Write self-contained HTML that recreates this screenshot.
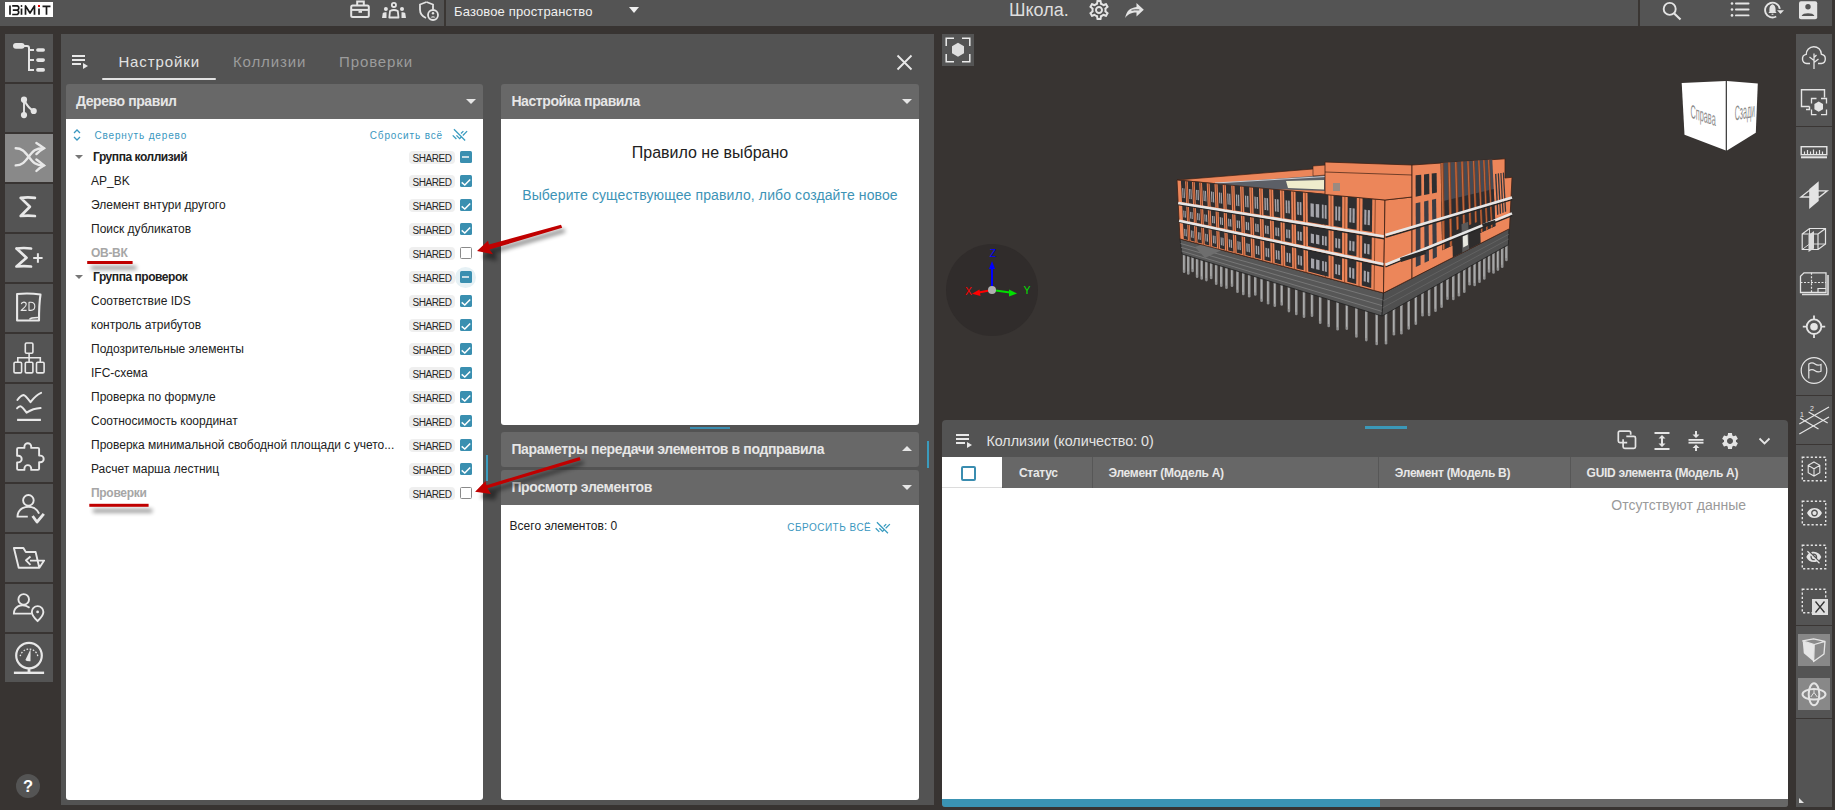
<!DOCTYPE html>
<html><head><meta charset="utf-8">
<style>
*{box-sizing:border-box;margin:0;padding:0}
html,body{width:1835px;height:810px;overflow:hidden;background:#383432;font-family:"Liberation Sans",sans-serif}
.a{position:absolute}
#top{left:0;top:0;width:1835px;height:26px;background:#545454}
.sb{position:absolute;left:5px;width:48px;height:48px;background:#545454}
.sb svg{position:absolute;left:0;top:0}
#panel{left:61px;top:34px;width:873px;height:771px;background:#535353}
.hdr{position:absolute;background:#686868;color:#e6e6e6;font-weight:bold;font-size:14px;letter-spacing:-0.42px;border-radius:3px 3px 0 0}
.hdr span{position:absolute;left:10px;top:10px;line-height:16px}
.tri{position:absolute;width:0;height:0;border-left:5px solid transparent;border-right:5px solid transparent;border-top:5px solid #e6e6e6}
.triu{position:absolute;width:0;height:0;border-left:5px solid transparent;border-right:5px solid transparent;border-bottom:5px solid #e6e6e6}
.white{position:absolute;background:#fff}
.row{position:absolute;left:0;width:417px;height:24px}
.row .t{position:absolute;left:25px;top:5px;font-size:12px;line-height:14px;color:#212121;white-space:nowrap}
.row .g{left:27px;font-weight:bold;letter-spacing:-0.45px}
.row .gr{color:#a6a6a6;font-weight:bold;letter-spacing:-0.3px}
.chip{position:absolute;left:343px;top:6px;width:46px;height:13px;border-radius:4px;background:#efefef;color:#262626;font-size:10px;line-height:13px;padding-top:1px;text-align:center;letter-spacing:-0.45px}
.cb{position:absolute;left:393.5px;top:6px;width:12px;height:12px;border-radius:1.5px;background:#3a8fb0}
.cbu{background:#fff;border:1px solid #8a8a8a}
.th{position:absolute;top:45.5px;font-size:12px;font-weight:bold;line-height:14px;color:#e8e8e8;letter-spacing:-0.3px;white-space:nowrap}
.ttri{position:absolute;left:9px;top:10px;width:0;height:0;border-left:4px solid transparent;border-right:4px solid transparent;border-top:4px solid #777}
</style></head>
<body>
<!-- TOP BAR -->
<div id="top" class="a">
  <!-- logo -->
  <svg class="a" style="left:5px;top:2px" width="48" height="15" viewBox="0 0 48 15">
    <rect width="48" height="15" fill="#fff"/>
    <g fill="none" stroke="#1a1a1a" stroke-width="1.7">
      <path d="M5 3.5 V12.8"/>
      <path d="M7.2 3.9 H12.3 A2.2 2.2 0 0 1 12.3 8.1 H7.8 M12.3 8.1 A2.4 2.4 0 0 1 12.3 12.5 H7.2"/>
      <path d="M16.5 6.5 V12.8"/>
      <path d="M20.5 12.8 V3.9 L25 11 L29.5 3.9 V12.8" stroke-linejoin="round"/>
      <path d="M34 6.5 V12.8"/>
      <path d="M37.5 4.3 H45.5 M41.5 4.3 V12.8"/>
    </g>
    <circle cx="16.5" cy="4" r="0.9" fill="#1a1a1a"/>
    <rect x="33" y="3" width="2" height="2" fill="#e00"/>
  </svg>
  <!-- top icons -->
  <svg class="a" style="left:348px;top:0" width="100" height="24" viewBox="0 0 100 24" fill="none" stroke="#e4e4e4" stroke-width="2">
    <rect x="3.2" y="5.4" width="17.6" height="11.6" rx="1.5"/>
    <path d="M3.2 9.9 H20.8"/>
    <path d="M9.2 5 V1.5 H15.8 V5"/>
    <rect x="10.5" y="10.8" width="3.5" height="2" fill="#e4e4e4" stroke="none"/>
    <circle cx="45.9" cy="4.9" r="2.1" stroke-width="1.8"/>
    <path d="M41.3 17.5 L42 11 Q45.9 9 49.8 11 L50.5 17.5 Z" stroke-width="1.8" stroke-linejoin="round"/>
    <g fill="#e4e4e4" stroke="none">
      <circle cx="37.9" cy="9" r="2"/><circle cx="54" cy="9" r="2"/>
      <path d="M34 18 L34.8 13 Q36 12 38.5 12.3 L38.5 18 Z"/>
      <path d="M58 18 L57.2 13 Q56 12 53.5 12.3 L53.5 18 Z"/>
    </g>
    <path d="M78.5 2 L72 4.5 V9.5 C72 13.5 74.5 16.5 78 18" stroke-width="1.8"/>
    <path d="M78.5 2 L85 4.5 V9.5" stroke-width="1.8"/>
    <circle cx="85" cy="15" r="5" stroke-width="1.8"/>
    <circle cx="85" cy="13.3" r="1.2" fill="#e4e4e4" stroke="none"/>
    <path d="M82.5 17.5 Q85 14.8 87.5 17.5 Z" fill="#e4e4e4" stroke="none"/>
  </svg>
  <svg class="a" style="left:1087px;top:-2px" width="24" height="24" viewBox="0 0 24 24"><path fill="#e4e4e4" d="M19.43 12.98c.04-.32.07-.64.07-.98 0-.34-.03-.66-.07-.98l2.11-1.65c.19-.15.24-.42.12-.64l-2-3.46a.5.5 0 0 0-.61-.22l-2.49 1c-.52-.4-1.08-.73-1.69-.98l-.38-2.65A.488.488 0 0 0 14 2h-4c-.25 0-.46.18-.49.42l-.38 2.65c-.61.25-1.17.59-1.69.98l-2.49-1a.566.566 0 0 0-.18-.03c-.17 0-.34.09-.43.25l-2 3.46c-.13.22-.07.49.12.64l2.11 1.65c-.04.32-.07.65-.07.98s.03.66.07.98l-2.11 1.65c-.19.15-.24.42-.12.64l2 3.46a.5.5 0 0 0 .61.22l2.49-1c.52.4 1.08.73 1.69.98l.38 2.65c.03.24.24.42.49.42h4c.25 0 .46-.18.49-.42l.38-2.65c.61-.25 1.17-.59 1.69-.98l2.49 1c.06.02.12.03.18.03.17 0 .34-.09.43-.25l2-3.46c.12-.22.07-.49-.12-.64l-2.11-1.65zm-1.98-1.71c.04.31.05.52.05.73 0 .21-.02.43-.05.73l-.14 1.13.89.7 1.08.84-.7 1.21-1.27-.51-1.04-.42-.9.68c-.43.32-.84.56-1.25.73l-1.06.43-.16 1.13-.2 1.35h-1.4l-.19-1.35-.16-1.13-1.06-.43c-.43-.18-.83-.41-1.23-.71l-.91-.7-1.06.43-1.27.51-.7-1.21 1.08-.84.89-.7-.14-1.13c-.03-.31-.05-.54-.05-.74s.02-.43.05-.73l.14-1.13-.89-.7-1.08-.84.7-1.21 1.27.51 1.04.42.9-.68c.43-.32.84-.56 1.25-.73l1.06-.43.16-1.13.2-1.35h1.39l.19 1.35.16 1.13 1.06.43c.43.18.83.41 1.23.71l.91.7 1.06-.43 1.27-.51.7 1.21-1.07.85-.89.7.14 1.13zM12 8c-2.21 0-4 1.79-4 4s1.79 4 4 4 4-1.79 4-4-1.79-4-4-4zm0 6c-1.1 0-2-.9-2-2s.9-2 2-2 2 .9 2 2-.9 2-2 2z"/></svg>
  <svg class="a" style="left:1124px;top:1px" width="21" height="18" viewBox="0 0 21 18"><path fill="#e4e4e4" d="M12.5 2 L19.8 8.8 L12.5 15.5 V11.5 C7.5 11.5 4 13 1.2 17 C2.2 10.5 5.8 6.8 12.5 6 Z"/><path d="M7.5 9.3 Q10 8.6 15.3 8.9" stroke="#545454" stroke-width="1" fill="none"/></svg>
  <svg class="a" style="left:1660px;top:0" width="24" height="22" viewBox="0 0 24 22" fill="none" stroke="#e4e4e4" stroke-width="1.9">
    <circle cx="9.7" cy="8.9" r="6"/><path d="M14 13.3 L20.5 19.5" stroke-width="2.2"/>
  </svg>
  <svg class="a" style="left:1729px;top:0" width="24" height="20" viewBox="0 0 24 20" fill="#e4e4e4">
    <circle cx="3" cy="3.5" r="1.3"/><circle cx="3" cy="9.5" r="1.3"/><circle cx="3" cy="15.4" r="1.3"/>
    <rect x="6" y="2.6" width="14.5" height="1.8" rx="0.9"/><rect x="6" y="8.6" width="14.5" height="1.8" rx="0.9"/><rect x="6" y="14.5" width="14.5" height="1.8" rx="0.9"/>
  </svg>
  <svg class="a" style="left:1762px;top:0" width="24" height="21" viewBox="0 0 24 21">
    <path d="M14.2 16.5 A7.4 7.4 0 1 1 17.8 8.8" fill="none" stroke="#e4e4e4" stroke-width="1.9"/>
    <path d="M15 10.2 H22 L18.5 13.9 Z" fill="#e4e4e4"/>
    <path d="M10.5 4.2 C8.2 5 7.4 7 7.4 9.5 V11.8 L6.4 12.9 H14.6 L13.6 11.8 V9.5 C13.6 7 12.8 5 10.5 4.2 Z" fill="#e4e4e4"/>
    <rect x="9.6" y="13.7" width="1.8" height="1.1" fill="#e4e4e4"/>
  </svg>
  <svg class="a" style="left:1798px;top:1px" width="20" height="19" viewBox="0 0 20 19">
    <rect x="1" y="0.2" width="18.2" height="18" rx="2" fill="#e4e4e4"/>
    <circle cx="10" cy="5.8" r="2.7" fill="#545454"/>
    <path d="M3.8 14.6 C4.5 11.3 15.5 11.3 16.2 14.6 V15 H3.8 Z" fill="#545454"/>
  </svg>
  <div class="a" style="left:444px;top:0;width:2px;height:26px;background:#3a3633"></div>
  <div class="a" style="left:454px;top:4px;font-size:13px;line-height:16px;color:#f0f0f0;letter-spacing:0.15px">Базовое пространство</div>
  <div class="tri" style="left:629px;top:7px;border-left-width:5.5px;border-right-width:5.5px;border-top-width:6px;border-top-color:#f0f0f0"></div>
  <div class="a" style="left:1009px;top:0px;font-size:18px;line-height:21px;color:#dedede">Школа.</div>
  <div class="a" style="left:1638px;top:0;width:2px;height:26px;background:#3a3633"></div>
  <div class="a" style="left:1832px;top:0;width:3px;height:26px;background:#383432"></div>
</div>

<!-- LEFT SIDEBAR -->
<div id="sidebar">
  <div class="sb" style="top:34px;background:#545454"><svg width="48" height="48" viewBox="0 0 48 48"><g fill="#e4e4e4"><rect x="8" y="8.9" width="11.6" height="5.9" rx="2.95"/><rect x="31.1" y="14.2" width="8.9" height="3.6" rx="1.8"/><rect x="31.1" y="24.3" width="8.9" height="3.6" rx="1.8"/><rect x="31.1" y="34.1" width="8.9" height="3.6" rx="1.8"/></g>
<path d="M19 11.9 H22 Q24 11.9 24 13.9 V35.9 H29 M24 16 H29 M24 26.1 H29" fill="none" stroke="#e4e4e4" stroke-width="2"/></svg></div>
  <div class="sb" style="top:84px;background:#545454"><svg width="48" height="48" viewBox="0 0 48 48"><g fill="#e4e4e4"><circle cx="19" cy="15.7" r="3.1"/><circle cx="19" cy="31.1" r="3.1"/><circle cx="28.7" cy="27" r="3.1"/></g>
<path d="M19 15.7 V31.1 M19.5 16.5 Q23 24 28.7 27" fill="none" stroke="#e4e4e4" stroke-width="1.9"/></svg></div>
  <div class="sb" style="top:134px;background:#898989"><svg width="48" height="48" viewBox="0 0 48 48"><g fill="none" stroke="#e8e8e8" stroke-width="2.4" stroke-linecap="round"><path d="M10.7 14.2 C17 14.2 19.5 17.5 23.7 22.8 C28 28.5 30.5 31.4 38.5 31.4"/><path d="M10.7 31.4 C17 31.4 19.5 28.2 23.7 22.8 C28 17 30.5 14.2 38.5 14.2"/><path d="M31.4 8.9 Q35.5 11.5 39 14.2 Q35 16.5 31.4 20.1"/><path d="M31.4 25.5 Q35.5 28.5 39 31.4 Q35 33.5 31.4 37"/></g></svg></div>
  <div class="sb" style="top:184px;background:#545454"><svg width="48" height="48" viewBox="0 0 48 48"><path d="M15.7 13.9 Q23 13 29.9 13.9 M15.7 13.9 L24.9 22.8 L15.7 32 Q23 31.2 29.9 32" fill="none" stroke="#e8e8e8" stroke-width="2.7" stroke-linecap="round" stroke-linejoin="round"/></svg></div>
  <div class="sb" style="top:234px;background:#545454"><svg width="48" height="48" viewBox="0 0 48 48"><path d="M11.5 14.5 Q19 13.5 26 14.5 M11.5 14.5 L21.5 23.7 L11.5 32.5 Q19 31.7 26 32.5" fill="none" stroke="#e8e8e8" stroke-width="2.7" stroke-linecap="round" stroke-linejoin="round"/>
<path d="M28.2 24 H37.6 M32.9 19.3 V28.7" stroke="#e8e8e8" stroke-width="2"/></svg></div>
  <div class="sb" style="top:284px;background:#545454"><svg width="48" height="48" viewBox="0 0 48 48"><path d="M12.1 10 Q24 8.8 35.5 10.5 Q34 20 34 36.5 H12.1 Z" fill="none" stroke="#e8e8e8" stroke-width="2.1" stroke-linejoin="round"/>
<path d="M24.5 35.5 Q25.5 33.5 33 33.5" fill="none" stroke="#e8e8e8" stroke-width="1.6"/>
<path d="M16.3 20.2 Q16.6 18.1 18.8 18.1 Q21.2 18.1 21.2 20.3 Q21.2 21.9 19.2 23.6 L16.1 26.4 H21.6 M24 18.2 V26.4 H25.9 Q29.8 26.4 29.8 22.3 Q29.8 18.2 25.9 18.2 Z" fill="none" stroke="#e8e8e8" stroke-width="1.1" stroke-linejoin="round"/></svg></div>
  <div class="sb" style="top:334px;background:#545454"><svg width="48" height="48" viewBox="0 0 48 48"><g fill="none" stroke="#e8e8e8" stroke-width="1.6"><rect x="20.3" y="9" width="7.6" height="10.2" rx="1.2"/><rect x="9" y="28.3" width="7.6" height="10.6" rx="1.2"/><rect x="20.3" y="28.3" width="7.6" height="10.6" rx="1.2"/><rect x="31.5" y="28.3" width="7.6" height="10.6" rx="1.2"/><path d="M24.1 19.2 V28.3 M12.8 28.3 V23.7 H35.3 V28.3"/></g></svg></div>
  <div class="sb" style="top:384px;background:#545454"><svg width="48" height="48" viewBox="0 0 48 48"><g fill="none" stroke="#e8e8e8" stroke-width="2" stroke-linecap="round" stroke-linejoin="round"><path d="M12.4 16 Q15.5 11.5 18.7 11 Q20 11 25.5 18.1 Q31 11 36.1 8.9"/><path d="M12.1 24.3 Q13.5 22.2 15.4 22.2 Q17 22.2 21.6 28.7 Q25 26.5 28.4 25.2 Q32 24.3 35.6 24"/></g>
<rect x="12.1" y="34.8" width="23.8" height="2.2" fill="#e8e8e8"/></svg></div>
  <div class="sb" style="top:434px;background:#545454"><svg width="48" height="48" viewBox="0 0 48 48"><path d="M13.3 13.9 H19.4 V12.6 A3.4 3.4 0 0 1 26.2 12.6 V13.9 H32.9 Q34.1 13.9 34.1 15.1 V21.6 H35.4 A3.3 3.3 0 0 1 35.4 28.2 H34.1 V34.7 Q34.1 35.9 32.9 35.9 H26.2 V34.5 A3.4 3.4 0 0 0 19.4 34.5 V35.9 H13.3 Q12.1 35.9 12.1 34.7 V28.4 H13.4 A3.3 3.3 0 0 0 13.4 21.8 H12.1 V15.1 Q12.1 13.9 13.3 13.9 Z" fill="none" stroke="#e8e8e8" stroke-width="1.9" stroke-linejoin="round"/></svg></div>
  <div class="sb" style="top:484px;background:#545454"><svg width="48" height="48" viewBox="0 0 48 48"><g fill="none" stroke="#e8e8e8" stroke-width="1.9"><circle cx="23.4" cy="16.3" r="5.3"/><path d="M22.8 32.6 H12.5 Q12.5 27 17.5 24.2 Q23.4 21.2 29.5 24.2 Q32.5 26 34.1 29.6"/></g>
<path d="M27.6 32 L32 38 L38.8 29.8" fill="none" stroke="#e8e8e8" stroke-width="2.8" stroke-linejoin="round"/></svg></div>
  <div class="sb" style="top:534px;background:#545454"><svg width="48" height="48" viewBox="0 0 48 48"><g fill="none" stroke="#e8e8e8" stroke-width="1.9" stroke-linejoin="round"><path d="M34.2 33.2 L30.6 18 H20.8 L18.4 14 H8.9 L13.7 33.8 H34.4 L39.1 26.6 H25"/><path d="M25.5 22.5 L21 26.3 L25.5 30.8"/></g></svg></div>
  <div class="sb" style="top:584px;background:#545454"><svg width="48" height="48" viewBox="0 0 48 48"><g fill="none" stroke="#e8e8e8" stroke-width="1.9"><circle cx="18.7" cy="15.4" r="5.3"/><path d="M26.4 29.6 H8.9 Q8.9 24.5 13 22.3 Q18.7 19.5 24.6 23.7"/><path d="M32.6 37 Q26.8 31.5 26.8 27.9 A5.8 5.8 0 0 1 38.4 27.9 Q38.4 31.5 32.6 37 Z"/></g>
<circle cx="32.6" cy="27.9" r="1.4" fill="#e8e8e8"/></svg></div>
  <div class="sb" style="top:634px;background:#545454"><svg width="48" height="48" viewBox="0 0 48 48"><g fill="none" stroke="#e8e8e8"><circle cx="24" cy="21.6" r="12.8" stroke-width="2.2"/><path d="M15.2 22.2 A9 9 0 0 1 32.8 22.2" stroke-width="1.3" stroke-dasharray="1.6 1.6"/></g>
<g fill="#e8e8e8"><rect x="8.9" y="37.6" width="30.2" height="2.4"/><rect x="22.6" y="34.2" width="2.8" height="4"/><path d="M25.6 15 L20.4 26 Q21.5 27.6 25.5 27.3 Z"/></g></svg></div>
  <div class="a" style="left:16px;top:774px;width:24px;height:24px;border-radius:50%;background:#545454;color:#fff;font-weight:bold;font-size:16.5px;line-height:25px;text-align:center">?</div>
</div>

<!-- MAIN PANEL -->
<div id="panel" class="a">
  <!-- tab icon -->
  <svg class="a" style="left:10px;top:20px" width="18" height="16" viewBox="0 0 18 16">
    <rect x="1" y="1" width="13" height="2" fill="#e8e8e8"/>
    <rect x="1" y="5" width="13" height="2" fill="#e8e8e8"/>
    <rect x="1" y="9" width="9" height="2" fill="#e8e8e8"/>
    <path d="M12 9 L17 12 L12 15 Z" fill="#e8e8e8"/>
  </svg>
  <div class="a" style="left:57.4px;top:18.6px;font-size:15px;line-height:17px;letter-spacing:0.9px;color:#e2e2e2">Настройки</div>
  <div class="a" style="left:171.9px;top:18.6px;font-size:15px;line-height:17px;letter-spacing:0.9px;color:#9c9c9c">Коллизии</div>
  <div class="a" style="left:278px;top:18.6px;font-size:15px;line-height:17px;letter-spacing:0.9px;color:#9c9c9c">Проверки</div>
  <div class="a" style="left:41px;top:44px;width:114px;height:2px;background:#e2e2e2;border-radius:1px"></div>
  <svg class="a" style="left:835px;top:20px" width="17" height="17" viewBox="0 0 17 17"><path d="M1.5 1.5 L15.5 15.5 M15.5 1.5 L1.5 15.5" stroke="#e8e8e8" stroke-width="1.8"/></svg>

  <!-- left section -->
  <div class="hdr" style="left:5px;top:50px;width:417px;height:35px"><span style="left:10px;top:9px">Дерево правил</span><div class="tri" style="left:400px;top:15px"></div></div>
  <div class="white" style="left:5px;top:85px;width:417px;height:681px;border-radius:0 0 3px 3px">
    <svg class="a" style="left:7px;top:9px" width="8" height="14" viewBox="0 0 8 14"><path d="M1 5 L4 2 L7 5 M1 9 L4 12 L7 9" fill="none" stroke="#3a97c0" stroke-width="1.3"/></svg>
    <div class="a" style="left:28.4px;top:10.6px;font-size:10px;line-height:12px;letter-spacing:0.85px;color:#3a97c0">Свернуть дерево</div>
    <div class="a" style="left:303.8px;top:10.6px;font-size:10px;line-height:12px;letter-spacing:0.85px;color:#3a97c0">Сбросить всё</div>
    <svg class="a" style="left:385.7px;top:8px" width="17" height="15" viewBox="0 0 17 15"><path transform="scale(0.66)" fill="#3a9cc0" d="M1.79 12l5.58 5.59L5.96 19 .37 13.41 1.79 12zm.45-7.78L12.9 14.89l-1.28 1.28L7.44 12l-1.41 1.41L11.62 19l2.69-2.69 4.89 4.89 1.41-1.41L3.65 2.81 2.24 4.22zm14.9 9.27L23.62 7 22.2 5.59l-6.48 6.48 1.42 1.42zM17.96 7l-1.41-1.41-3.65 3.66 1.41 1.41L17.96 7z"/></svg>
<div class="row" style="top:26px"><div class="ttri"></div><div class="t g">Группа коллизий</div><div class="chip">SHARED</div><div class="cb"><div class="a" style="left:2.7px;top:5px;width:6.7px;height:2px;background:#c5dce5"></div></div></div>
<div class="row" style="top:50px"><div class="t">AP_BK</div><div class="chip">SHARED</div><div class="cb"><svg width="12" height="12" viewBox="0 0 12 12"><path d="M1.7 5.4 L4.8 8 L10.2 2.4" fill="none" stroke="#fff" stroke-width="1.5"/></svg></div></div>
<div class="row" style="top:74px"><div class="t">Элемент внтури другого</div><div class="chip">SHARED</div><div class="cb"><svg width="12" height="12" viewBox="0 0 12 12"><path d="M1.7 5.4 L4.8 8 L10.2 2.4" fill="none" stroke="#fff" stroke-width="1.5"/></svg></div></div>
<div class="row" style="top:98px"><div class="t">Поиск дубликатов</div><div class="chip">SHARED</div><div class="cb"><svg width="12" height="12" viewBox="0 0 12 12"><path d="M1.7 5.4 L4.8 8 L10.2 2.4" fill="none" stroke="#fff" stroke-width="1.5"/></svg></div></div>
<div class="row" style="top:122px"><div class="t gr">ОВ-ВК</div><div class="chip">SHARED</div><div class="cb cbu"></div></div>
<div class="row" style="top:146px"><div class="ttri"></div><div class="t g">Группа проверок</div><div class="chip">SHARED</div><div class="a" style="left:389px;top:2px;width:21px;height:21px;border-radius:50%;background:#e6f1f5"></div><div class="cb"><div class="a" style="left:2.7px;top:5px;width:6.7px;height:2px;background:#c5dce5"></div></div></div>
<div class="row" style="top:170px"><div class="t">Соответствие IDS</div><div class="chip">SHARED</div><div class="cb"><svg width="12" height="12" viewBox="0 0 12 12"><path d="M1.7 5.4 L4.8 8 L10.2 2.4" fill="none" stroke="#fff" stroke-width="1.5"/></svg></div></div>
<div class="row" style="top:194px"><div class="t">контроль атрибутов</div><div class="chip">SHARED</div><div class="cb"><svg width="12" height="12" viewBox="0 0 12 12"><path d="M1.7 5.4 L4.8 8 L10.2 2.4" fill="none" stroke="#fff" stroke-width="1.5"/></svg></div></div>
<div class="row" style="top:218px"><div class="t">Подозрительные элементы</div><div class="chip">SHARED</div><div class="cb"><svg width="12" height="12" viewBox="0 0 12 12"><path d="M1.7 5.4 L4.8 8 L10.2 2.4" fill="none" stroke="#fff" stroke-width="1.5"/></svg></div></div>
<div class="row" style="top:242px"><div class="t">IFC-схема</div><div class="chip">SHARED</div><div class="cb"><svg width="12" height="12" viewBox="0 0 12 12"><path d="M1.7 5.4 L4.8 8 L10.2 2.4" fill="none" stroke="#fff" stroke-width="1.5"/></svg></div></div>
<div class="row" style="top:266px"><div class="t">Проверка по формуле</div><div class="chip">SHARED</div><div class="cb"><svg width="12" height="12" viewBox="0 0 12 12"><path d="M1.7 5.4 L4.8 8 L10.2 2.4" fill="none" stroke="#fff" stroke-width="1.5"/></svg></div></div>
<div class="row" style="top:290px"><div class="t">Соотносимость координат</div><div class="chip">SHARED</div><div class="cb"><svg width="12" height="12" viewBox="0 0 12 12"><path d="M1.7 5.4 L4.8 8 L10.2 2.4" fill="none" stroke="#fff" stroke-width="1.5"/></svg></div></div>
<div class="row" style="top:314px"><div class="t">Проверка минимальной свободной площади с учето...</div><div class="chip">SHARED</div><div class="cb"><svg width="12" height="12" viewBox="0 0 12 12"><path d="M1.7 5.4 L4.8 8 L10.2 2.4" fill="none" stroke="#fff" stroke-width="1.5"/></svg></div></div>
<div class="row" style="top:338px"><div class="t">Расчет марша лестниц</div><div class="chip">SHARED</div><div class="cb"><svg width="12" height="12" viewBox="0 0 12 12"><path d="M1.7 5.4 L4.8 8 L10.2 2.4" fill="none" stroke="#fff" stroke-width="1.5"/></svg></div></div>
<div class="row" style="top:362px"><div class="t gr">Проверки</div><div class="chip">SHARED</div><div class="cb cbu"></div></div>
  </div>

  <!-- right section -->
  <div class="hdr" style="left:440px;top:50px;width:418px;height:35px"><span style="left:10.4px;top:8.8px">Настройка правила</span><div class="tri" style="left:401px;top:15px"></div></div>
  <div class="white" style="left:440px;top:85px;width:418px;height:306px;border-radius:0 0 3px 3px">
    <div class="a" style="left:0;top:24.7px;width:418px;text-align:center;font-size:16px;line-height:18px;color:#212121">Правило не выбрано</div>
    <div class="a" style="left:0;top:68.3px;width:418px;text-align:center;font-size:14px;line-height:16px;letter-spacing:0.12px;color:#3d93b6">Выберите существующее правило, либо создайте новое</div>
  </div>
  <div class="a" style="left:629px;top:393px;width:40px;height:2px;background:#3a8db0"></div>
  <div class="hdr" style="left:440px;top:398px;width:418px;height:35px;border-radius:3px"><span style="left:10.4px;top:9.2px;letter-spacing:-0.37px">Параметры передачи элементов в подправила</span><div class="triu" style="left:401px;top:14px"></div></div>
  <div class="hdr" style="left:440px;top:436px;width:418px;height:35px"><span style="left:10.4px;top:9px;letter-spacing:-0.33px">Просмотр элементов</span><div class="tri" style="left:401px;top:15px"></div></div>
  <div class="white" style="left:440px;top:471px;width:418px;height:295px;border-radius:0 0 3px 3px">
    <div class="a" style="left:8.6px;top:13.8px;font-size:12px;line-height:14px;color:#212121">Всего элементов: 0</div>
    <div class="a" style="left:286.2px;top:16.7px;font-size:10px;line-height:12px;letter-spacing:0.5px;color:#3a97c0">СБРОСИТЬ ВСЁ</div>
    <svg class="a" style="left:374px;top:14.6px" width="17" height="15" viewBox="0 0 17 15"><path transform="scale(0.65)" fill="#3a9cc0" d="M1.79 12l5.58 5.59L5.96 19 .37 13.41 1.79 12zm.45-7.78L12.9 14.89l-1.28 1.28L7.44 12l-1.41 1.41L11.62 19l2.69-2.69 4.89 4.89 1.41-1.41L3.65 2.81 2.24 4.22zm14.9 9.27L23.62 7 22.2 5.59l-6.48 6.48 1.42 1.42zM17.96 7l-1.41-1.41-3.65 3.66 1.41 1.41L17.96 7z"/></svg>
  </div>
  <div class="a" style="left:425px;top:421px;width:2px;height:26px;background:#3a9bbd"></div>
  <div class="a" style="left:866px;top:407px;width:2px;height:27px;background:#3a9bbd"></div>
</div>
<!-- VIEWER -->
<div id="viewer">
  <div class="a" style="left:942px;top:34px;width:32px;height:32px;background:#545454">
    <svg width="32" height="32" viewBox="0 0 32 32">
      <path d="M4.2 12 V4.2 H12 M20 4.2 H27.8 V12 M27.8 20 V27.8 H20 M12 27.8 H4.2 V20" fill="none" stroke="#ececec" stroke-width="1.5"/>
      <path d="M16 8.8 L22 12.3 V19.3 L16 22.8 L10 19.3 V12.3 Z" fill="#dedede"/>
    </svg>
  </div>
  <svg class="a" style="left:0;top:0" width="1835" height="810" viewBox="0 0 1835 810">
    <circle cx="992" cy="290" r="46" fill="#302c2b"/>
    <g stroke-linecap="round">
      <line x1="992" y1="289" x2="992" y2="265" stroke="#0000ff" stroke-width="2"/>
      <path d="M992 261 L995 269 H989 Z" fill="#0000ff"/>
      <line x1="992" y1="290" x2="976" y2="293" stroke="#ff0000" stroke-width="2"/>
      <path d="M972 293.8 L979.5 289.5 L980.5 296 Z" fill="#ff0000"/>
      <line x1="992" y1="290" x2="1010" y2="292.5" stroke="#00e000" stroke-width="2"/>
      <path d="M1017 293.5 L1009 289.5 L1009 296.5 Z" fill="#00e000"/>
    </g>
    <circle cx="992" cy="290" r="4" fill="#b0b0b0"/>
    <text x="989.8" y="256.5" font-family="Liberation Sans" font-size="10.5" fill="#0000ff">Z</text>
    <text x="965" y="295.3" font-family="Liberation Sans" font-size="10.5" fill="#ff0000">X</text>
    <text x="1023.5" y="294.2" font-family="Liberation Sans" font-size="10.5" fill="#00e000">Y</text>
    <!-- cube -->
    <polygon points="1681.7,83.1 1725.9,81 1725.9,150.4 1684.5,134.7" fill="#ffffff"/>
    <polygon points="1727,81 1757.8,83.4 1755.8,132.7 1727,150.4" fill="#ffffff"/>
    <line x1="1726.4" y1="81" x2="1726.4" y2="150.4" stroke="#444" stroke-width="1.2"/>
    <text x="0" y="0" font-family="Liberation Sans" font-size="13" fill="#8a8a8a" transform="matrix(0.56,0.19,0,1.45,1690.6,117.5)">Справа</text>
    <text x="0" y="0" font-family="Liberation Sans" font-size="13" fill="#8a8a8a" transform="matrix(0.54,-0.1,0,1.6,1734.7,120.5)">Сзади</text>
    <!-- building -->
<line x1="1184.1" y1="254.6" x2="1184.1" y2="271.8" stroke="#909090" stroke-width="2.6" stroke-linecap="round"/>
<line x1="1183.8" y1="255.6" x2="1183.8" y2="269.8" stroke="#b4b4b4" stroke-width="0.9"/>
<line x1="1188.3" y1="256.0" x2="1188.3" y2="273.4" stroke="#909090" stroke-width="2.6" stroke-linecap="round"/>
<line x1="1188.0" y1="257.0" x2="1188.0" y2="271.4" stroke="#b4b4b4" stroke-width="0.9"/>
<line x1="1192.6" y1="257.3" x2="1192.6" y2="271.0" stroke="#909090" stroke-width="2.6" stroke-linecap="round"/>
<line x1="1192.3" y1="258.3" x2="1192.3" y2="269.0" stroke="#b4b4b4" stroke-width="0.9"/>
<line x1="1197.1" y1="258.7" x2="1197.1" y2="276.7" stroke="#909090" stroke-width="2.6" stroke-linecap="round"/>
<line x1="1196.8" y1="259.7" x2="1196.8" y2="274.7" stroke="#b4b4b4" stroke-width="0.9"/>
<line x1="1201.7" y1="260.1" x2="1201.7" y2="278.4" stroke="#909090" stroke-width="2.6" stroke-linecap="round"/>
<line x1="1201.4" y1="261.1" x2="1201.4" y2="276.4" stroke="#b4b4b4" stroke-width="0.9"/>
<line x1="1206.4" y1="261.6" x2="1206.4" y2="280.1" stroke="#909090" stroke-width="2.6" stroke-linecap="round"/>
<line x1="1206.1" y1="262.6" x2="1206.1" y2="278.1" stroke="#b4b4b4" stroke-width="0.9"/>
<line x1="1211.2" y1="263.1" x2="1211.2" y2="278.0" stroke="#909090" stroke-width="2.6" stroke-linecap="round"/>
<line x1="1210.9" y1="264.1" x2="1210.9" y2="276.0" stroke="#b4b4b4" stroke-width="0.9"/>
<line x1="1216.2" y1="264.6" x2="1216.2" y2="283.8" stroke="#909090" stroke-width="2.6" stroke-linecap="round"/>
<line x1="1215.9" y1="265.6" x2="1215.9" y2="281.8" stroke="#b4b4b4" stroke-width="0.9"/>
<line x1="1221.3" y1="266.2" x2="1221.3" y2="285.7" stroke="#909090" stroke-width="2.6" stroke-linecap="round"/>
<line x1="1221.0" y1="267.2" x2="1221.0" y2="283.7" stroke="#b4b4b4" stroke-width="0.9"/>
<line x1="1226.5" y1="267.8" x2="1226.5" y2="287.7" stroke="#909090" stroke-width="2.6" stroke-linecap="round"/>
<line x1="1226.2" y1="268.8" x2="1226.2" y2="285.7" stroke="#b4b4b4" stroke-width="0.9"/>
<line x1="1232.0" y1="269.5" x2="1232.0" y2="285.7" stroke="#909090" stroke-width="2.6" stroke-linecap="round"/>
<line x1="1231.7" y1="270.5" x2="1231.7" y2="283.7" stroke="#b4b4b4" stroke-width="0.9"/>
<line x1="1237.5" y1="271.2" x2="1237.5" y2="291.8" stroke="#909090" stroke-width="2.6" stroke-linecap="round"/>
<line x1="1237.2" y1="272.2" x2="1237.2" y2="289.8" stroke="#b4b4b4" stroke-width="0.9"/>
<line x1="1243.3" y1="273.0" x2="1243.3" y2="294.0" stroke="#909090" stroke-width="2.6" stroke-linecap="round"/>
<line x1="1243.0" y1="274.0" x2="1243.0" y2="292.0" stroke="#b4b4b4" stroke-width="0.9"/>
<line x1="1249.2" y1="274.8" x2="1249.2" y2="296.2" stroke="#909090" stroke-width="2.6" stroke-linecap="round"/>
<line x1="1248.9" y1="275.8" x2="1248.9" y2="294.2" stroke="#b4b4b4" stroke-width="0.9"/>
<line x1="1255.3" y1="276.7" x2="1255.3" y2="294.5" stroke="#909090" stroke-width="2.6" stroke-linecap="round"/>
<line x1="1255.0" y1="277.7" x2="1255.0" y2="292.5" stroke="#b4b4b4" stroke-width="0.9"/>
<line x1="1261.6" y1="278.7" x2="1261.6" y2="300.8" stroke="#909090" stroke-width="2.6" stroke-linecap="round"/>
<line x1="1261.3" y1="279.7" x2="1261.3" y2="298.8" stroke="#b4b4b4" stroke-width="0.9"/>
<line x1="1268.1" y1="280.7" x2="1268.1" y2="303.3" stroke="#909090" stroke-width="2.6" stroke-linecap="round"/>
<line x1="1267.8" y1="281.7" x2="1267.8" y2="301.3" stroke="#b4b4b4" stroke-width="0.9"/>
<line x1="1274.8" y1="282.8" x2="1274.8" y2="305.8" stroke="#909090" stroke-width="2.6" stroke-linecap="round"/>
<line x1="1274.5" y1="283.8" x2="1274.5" y2="303.8" stroke="#b4b4b4" stroke-width="0.9"/>
<line x1="1281.7" y1="284.9" x2="1281.7" y2="304.4" stroke="#909090" stroke-width="2.6" stroke-linecap="round"/>
<line x1="1281.4" y1="285.9" x2="1281.4" y2="302.4" stroke="#b4b4b4" stroke-width="0.9"/>
<line x1="1288.9" y1="287.1" x2="1288.9" y2="311.1" stroke="#909090" stroke-width="2.6" stroke-linecap="round"/>
<line x1="1288.6" y1="288.1" x2="1288.6" y2="309.1" stroke="#b4b4b4" stroke-width="0.9"/>
<line x1="1296.3" y1="289.4" x2="1296.3" y2="313.9" stroke="#909090" stroke-width="2.6" stroke-linecap="round"/>
<line x1="1296.0" y1="290.4" x2="1296.0" y2="311.9" stroke="#b4b4b4" stroke-width="0.9"/>
<line x1="1304.0" y1="291.8" x2="1304.0" y2="316.8" stroke="#909090" stroke-width="2.6" stroke-linecap="round"/>
<line x1="1303.7" y1="292.8" x2="1303.7" y2="314.8" stroke="#b4b4b4" stroke-width="0.9"/>
<line x1="1312.0" y1="294.3" x2="1312.0" y2="315.7" stroke="#909090" stroke-width="2.6" stroke-linecap="round"/>
<line x1="1311.7" y1="295.3" x2="1311.7" y2="313.7" stroke="#b4b4b4" stroke-width="0.9"/>
<line x1="1320.2" y1="296.8" x2="1320.2" y2="322.8" stroke="#909090" stroke-width="2.6" stroke-linecap="round"/>
<line x1="1319.9" y1="297.8" x2="1319.9" y2="320.8" stroke="#b4b4b4" stroke-width="0.9"/>
<line x1="1328.7" y1="299.5" x2="1328.7" y2="326.0" stroke="#909090" stroke-width="2.6" stroke-linecap="round"/>
<line x1="1328.4" y1="300.5" x2="1328.4" y2="324.0" stroke="#b4b4b4" stroke-width="0.9"/>
<line x1="1337.6" y1="302.2" x2="1337.6" y2="329.3" stroke="#909090" stroke-width="2.6" stroke-linecap="round"/>
<line x1="1337.3" y1="303.2" x2="1337.3" y2="327.3" stroke="#b4b4b4" stroke-width="0.9"/>
<line x1="1346.8" y1="305.1" x2="1346.8" y2="328.8" stroke="#909090" stroke-width="2.6" stroke-linecap="round"/>
<line x1="1346.5" y1="306.1" x2="1346.5" y2="326.8" stroke="#b4b4b4" stroke-width="0.9"/>
<line x1="1356.4" y1="308.1" x2="1356.4" y2="336.4" stroke="#909090" stroke-width="2.6" stroke-linecap="round"/>
<line x1="1356.1" y1="309.1" x2="1356.1" y2="334.4" stroke="#b4b4b4" stroke-width="0.9"/>
<line x1="1366.3" y1="311.1" x2="1366.3" y2="340.1" stroke="#909090" stroke-width="2.6" stroke-linecap="round"/>
<line x1="1366.0" y1="312.1" x2="1366.0" y2="338.1" stroke="#b4b4b4" stroke-width="0.9"/>
<line x1="1376.7" y1="314.3" x2="1376.7" y2="344.0" stroke="#909090" stroke-width="2.6" stroke-linecap="round"/>
<line x1="1376.4" y1="315.3" x2="1376.4" y2="342.0" stroke="#b4b4b4" stroke-width="0.9"/>
<line x1="1386.0" y1="313.7" x2="1386.0" y2="343.3" stroke="#909090" stroke-width="2.6" stroke-linecap="round"/>
<line x1="1385.7" y1="314.7" x2="1385.7" y2="341.3" stroke="#b4b4b4" stroke-width="0.9"/>
<line x1="1393.9" y1="309.3" x2="1393.9" y2="334.2" stroke="#909090" stroke-width="2.6" stroke-linecap="round"/>
<line x1="1393.6" y1="310.3" x2="1393.6" y2="332.2" stroke="#b4b4b4" stroke-width="0.9"/>
<line x1="1401.4" y1="305.0" x2="1401.4" y2="333.2" stroke="#909090" stroke-width="2.6" stroke-linecap="round"/>
<line x1="1401.1" y1="306.0" x2="1401.1" y2="331.2" stroke="#b4b4b4" stroke-width="0.9"/>
<line x1="1408.7" y1="300.9" x2="1408.7" y2="328.4" stroke="#909090" stroke-width="2.6" stroke-linecap="round"/>
<line x1="1408.4" y1="301.9" x2="1408.4" y2="326.4" stroke="#b4b4b4" stroke-width="0.9"/>
<line x1="1415.8" y1="297.0" x2="1415.8" y2="323.7" stroke="#909090" stroke-width="2.6" stroke-linecap="round"/>
<line x1="1415.5" y1="298.0" x2="1415.5" y2="321.7" stroke="#b4b4b4" stroke-width="0.9"/>
<line x1="1422.5" y1="293.1" x2="1422.5" y2="315.3" stroke="#909090" stroke-width="2.6" stroke-linecap="round"/>
<line x1="1422.2" y1="294.1" x2="1422.2" y2="313.3" stroke="#b4b4b4" stroke-width="0.9"/>
<line x1="1429.1" y1="289.4" x2="1429.1" y2="314.9" stroke="#909090" stroke-width="2.6" stroke-linecap="round"/>
<line x1="1428.8" y1="290.4" x2="1428.8" y2="312.9" stroke="#b4b4b4" stroke-width="0.9"/>
<line x1="1435.5" y1="285.8" x2="1435.5" y2="310.8" stroke="#909090" stroke-width="2.6" stroke-linecap="round"/>
<line x1="1435.2" y1="286.8" x2="1435.2" y2="308.8" stroke="#b4b4b4" stroke-width="0.9"/>
<line x1="1441.6" y1="282.4" x2="1441.6" y2="306.7" stroke="#909090" stroke-width="2.6" stroke-linecap="round"/>
<line x1="1441.3" y1="283.4" x2="1441.3" y2="304.7" stroke="#b4b4b4" stroke-width="0.9"/>
<line x1="1447.5" y1="279.0" x2="1447.5" y2="298.8" stroke="#909090" stroke-width="2.6" stroke-linecap="round"/>
<line x1="1447.2" y1="280.0" x2="1447.2" y2="296.8" stroke="#b4b4b4" stroke-width="0.9"/>
<line x1="1453.3" y1="275.8" x2="1453.3" y2="299.0" stroke="#909090" stroke-width="2.6" stroke-linecap="round"/>
<line x1="1453.0" y1="276.8" x2="1453.0" y2="297.0" stroke="#b4b4b4" stroke-width="0.9"/>
<line x1="1458.9" y1="272.6" x2="1458.9" y2="295.3" stroke="#909090" stroke-width="2.6" stroke-linecap="round"/>
<line x1="1458.6" y1="273.6" x2="1458.6" y2="293.3" stroke="#b4b4b4" stroke-width="0.9"/>
<line x1="1464.3" y1="269.6" x2="1464.3" y2="291.8" stroke="#909090" stroke-width="2.6" stroke-linecap="round"/>
<line x1="1464.0" y1="270.6" x2="1464.0" y2="289.8" stroke="#b4b4b4" stroke-width="0.9"/>
<line x1="1469.5" y1="266.6" x2="1469.5" y2="284.3" stroke="#909090" stroke-width="2.6" stroke-linecap="round"/>
<line x1="1469.2" y1="267.6" x2="1469.2" y2="282.3" stroke="#b4b4b4" stroke-width="0.9"/>
<line x1="1474.6" y1="263.8" x2="1474.6" y2="285.0" stroke="#909090" stroke-width="2.6" stroke-linecap="round"/>
<line x1="1474.3" y1="264.8" x2="1474.3" y2="283.0" stroke="#b4b4b4" stroke-width="0.9"/>
<line x1="1479.5" y1="261.0" x2="1479.5" y2="281.7" stroke="#909090" stroke-width="2.6" stroke-linecap="round"/>
<line x1="1479.2" y1="262.0" x2="1479.2" y2="279.7" stroke="#b4b4b4" stroke-width="0.9"/>
<line x1="1484.3" y1="258.3" x2="1484.3" y2="278.5" stroke="#909090" stroke-width="2.6" stroke-linecap="round"/>
<line x1="1484.0" y1="259.3" x2="1484.0" y2="276.5" stroke="#b4b4b4" stroke-width="0.9"/>
<line x1="1489.0" y1="255.7" x2="1489.0" y2="271.5" stroke="#909090" stroke-width="2.6" stroke-linecap="round"/>
<line x1="1488.7" y1="256.7" x2="1488.7" y2="269.5" stroke="#b4b4b4" stroke-width="0.9"/>
<line x1="1493.5" y1="253.1" x2="1493.5" y2="272.5" stroke="#909090" stroke-width="2.6" stroke-linecap="round"/>
<line x1="1493.2" y1="254.1" x2="1493.2" y2="270.5" stroke="#b4b4b4" stroke-width="0.9"/>
<line x1="1497.9" y1="250.6" x2="1497.9" y2="269.6" stroke="#909090" stroke-width="2.6" stroke-linecap="round"/>
<line x1="1497.6" y1="251.6" x2="1497.6" y2="267.6" stroke="#b4b4b4" stroke-width="0.9"/>
<line x1="1502.2" y1="248.2" x2="1502.2" y2="266.8" stroke="#909090" stroke-width="2.6" stroke-linecap="round"/>
<line x1="1501.9" y1="249.2" x2="1501.9" y2="264.8" stroke="#b4b4b4" stroke-width="0.9"/>
<line x1="1506.4" y1="245.9" x2="1506.4" y2="260.0" stroke="#909090" stroke-width="2.6" stroke-linecap="round"/>
<line x1="1506.1" y1="246.9" x2="1506.1" y2="258.0" stroke="#b4b4b4" stroke-width="0.9"/>
<polygon points="1180.0,239.0 1383.5,293.0 1382.0,316.0 1182.0,254.0" fill="#575757" stroke="#222" stroke-width="0.8"/>
<line x1="1180.6" y1="243.5" x2="1383.0" y2="300.0" stroke="#7a7a7a" stroke-width="0.9"/>
<line x1="1181.1" y1="247.3" x2="1382.7" y2="305.8" stroke="#7a7a7a" stroke-width="0.9"/>
<line x1="1181.6" y1="251.0" x2="1382.3" y2="311.5" stroke="#7a7a7a" stroke-width="0.9"/>
<polygon points="1195.0,247.0 1215.0,240.0 1230.0,246.0 1205.0,258.0" fill="#6e6e6e"/>
<polygon points="1383.5,293.0 1509.0,228.7 1508.4,244.7 1382.0,316.0" fill="#505050" stroke="#222" stroke-width="0.8"/>
<line x1="1383.0" y1="301.0" x2="1508.8" y2="234.3" stroke="#666" stroke-width="0.8"/>
<line x1="1382.5" y1="307.9" x2="1508.6" y2="239.1" stroke="#666" stroke-width="0.8"/>
<polygon points="1177.0,180.0 1313.0,169.0 1326.0,169.0 1326.0,194.5" fill="#ec865a" stroke="#3c2014" stroke-width="0.7"/>
<polygon points="1205.0,184.0 1326.0,175.0 1326.0,191.0 1240.0,188.0" fill="#5c5f66"/>
<line x1="1215" y1="183" x2="1326" y2="176.5" stroke="#c8ccd4" stroke-width="1"/>
<polygon points="1286.0,181.0 1324.0,180.0 1324.0,189.5 1288.0,188.0" fill="#efeccc"/>
<polygon points="1313.0,166.0 1326.0,165.0 1326.0,175.0 1313.0,176.0" fill="#ec865a" stroke="#3c2014" stroke-width="0.6"/>
<polygon points="1177.0,180.0 1385.0,200.0 1383.5,293.0 1180.0,239.0" fill="#ec865a" stroke="#3c2014" stroke-width="0.8"/>
<polygon points="1180.9,180.4 1185.1,180.8 1186.2,202.8 1182.0,202.1" fill="#2e2e30"/>
<polygon points="1182.1,188.1 1183.0,188.2 1183.5,198.0 1182.6,197.9" fill="#a4a4aa"/>
<polygon points="1183.6,188.3 1184.5,188.4 1185.0,198.3 1184.1,198.1" fill="#a4a4aa"/>
<polygon points="1182.2,205.1 1186.3,205.8 1187.0,220.9 1182.9,220.0" fill="#2e2e30"/>
<polygon points="1183.2,210.5 1184.1,210.7 1184.5,217.4 1183.6,217.2" fill="#a4a4aa"/>
<polygon points="1184.7,210.8 1185.6,210.9 1186.0,217.7 1185.0,217.5" fill="#a4a4aa"/>
<polygon points="1183.0,223.0 1187.2,223.9 1187.9,239.9 1183.8,238.9" fill="#2e2e30"/>
<polygon points="1184.1,228.7 1185.0,229.0 1185.4,236.1 1184.5,235.9" fill="#a4a4aa"/>
<polygon points="1185.6,229.1 1186.5,229.3 1186.9,236.5 1185.9,236.3" fill="#a4a4aa"/>
<line x1="1186.4" y1="180.9" x2="1189.3" y2="241.5" stroke="#7a3a1e" stroke-width="0.8"/>
<polygon points="1187.7,181.0 1192.0,181.4 1193.0,203.9 1188.7,203.2" fill="#2e2e30"/>
<polygon points="1188.9,188.9 1189.9,189.0 1190.3,199.0 1189.4,198.9" fill="#a4a4aa"/>
<polygon points="1190.4,189.1 1191.4,189.2 1191.9,199.3 1190.9,199.1" fill="#a4a4aa"/>
<polygon points="1188.9,206.2 1193.2,207.0 1193.9,222.3 1189.6,221.4" fill="#2e2e30"/>
<polygon points="1190.0,211.7 1190.9,211.9 1191.3,218.7 1190.3,218.6" fill="#a4a4aa"/>
<polygon points="1191.5,212.0 1192.5,212.2 1192.8,219.1 1191.8,218.9" fill="#a4a4aa"/>
<polygon points="1189.8,224.4 1194.0,225.4 1194.8,241.7 1190.5,240.6" fill="#2e2e30"/>
<polygon points="1190.9,230.3 1191.8,230.5 1192.1,237.8 1191.2,237.6" fill="#a4a4aa"/>
<polygon points="1192.4,230.7 1193.4,230.9 1193.7,238.2 1192.7,238.0" fill="#a4a4aa"/>
<line x1="1193.4" y1="181.6" x2="1196.2" y2="243.3" stroke="#7a3a1e" stroke-width="0.8"/>
<polygon points="1194.7,181.7 1199.2,182.1 1200.2,205.0 1195.7,204.3" fill="#2e2e30"/>
<polygon points="1196.0,189.8 1197.0,189.9 1197.4,200.1 1196.4,199.9" fill="#a4a4aa"/>
<polygon points="1197.5,189.9 1198.6,190.1 1199.0,200.3 1198.0,200.2" fill="#a4a4aa"/>
<polygon points="1195.9,207.4 1200.4,208.1 1201.0,223.8 1196.6,222.9" fill="#2e2e30"/>
<polygon points="1197.0,213.0 1198.0,213.2 1198.3,220.2 1197.3,220.0" fill="#a4a4aa"/>
<polygon points="1198.6,213.3 1199.6,213.5 1199.9,220.5 1198.9,220.3" fill="#a4a4aa"/>
<polygon points="1196.7,225.9 1201.2,226.9 1201.9,243.6 1197.5,242.4" fill="#2e2e30"/>
<polygon points="1197.9,231.9 1198.8,232.2 1199.2,239.6 1198.2,239.4" fill="#a4a4aa"/>
<polygon points="1199.4,232.3 1200.4,232.5 1200.8,240.0 1199.7,239.8" fill="#a4a4aa"/>
<line x1="1200.6" y1="182.3" x2="1203.3" y2="245.2" stroke="#7a3a1e" stroke-width="0.8"/>
<polygon points="1202.0,182.4 1206.7,182.9 1207.7,206.2 1203.0,205.4" fill="#2e2e30"/>
<polygon points="1203.3,190.6 1204.3,190.7 1204.8,201.1 1203.7,201.0" fill="#a4a4aa"/>
<polygon points="1204.9,190.8 1206.0,190.9 1206.4,201.4 1205.4,201.2" fill="#a4a4aa"/>
<polygon points="1203.2,208.6 1207.8,209.4 1208.5,225.3 1203.8,224.4" fill="#2e2e30"/>
<polygon points="1204.3,214.3 1205.3,214.5 1205.6,221.6 1204.6,221.4" fill="#a4a4aa"/>
<polygon points="1205.9,214.6 1207.0,214.8 1207.3,222.0 1206.2,221.7" fill="#a4a4aa"/>
<polygon points="1204.0,227.5 1208.6,228.5 1209.3,245.5 1204.7,244.3" fill="#2e2e30"/>
<polygon points="1205.1,233.6 1206.1,233.9 1206.5,241.5 1205.5,241.2" fill="#a4a4aa"/>
<polygon points="1206.7,234.0 1207.8,234.3 1208.1,241.9 1207.1,241.6" fill="#a4a4aa"/>
<line x1="1208.2" y1="183.0" x2="1210.8" y2="247.2" stroke="#7a3a1e" stroke-width="0.8"/>
<polygon points="1209.6,183.1 1214.5,183.6 1215.4,207.4 1210.6,206.6" fill="#2e2e30"/>
<polygon points="1210.9,191.5 1212.0,191.6 1212.4,202.3 1211.4,202.1" fill="#a4a4aa"/>
<polygon points="1212.6,191.7 1213.8,191.9 1214.2,202.5 1213.1,202.4" fill="#a4a4aa"/>
<polygon points="1210.7,209.9 1215.6,210.7 1216.2,227.0 1211.4,226.0" fill="#2e2e30"/>
<polygon points="1211.9,215.7 1213.0,215.9 1213.3,223.2 1212.2,222.9" fill="#a4a4aa"/>
<polygon points="1213.6,216.0 1214.7,216.2 1215.0,223.5 1213.9,223.3" fill="#a4a4aa"/>
<polygon points="1211.5,229.2 1216.3,230.2 1217.0,247.6 1212.2,246.3" fill="#2e2e30"/>
<polygon points="1212.7,235.4 1213.8,235.6 1214.1,243.4 1213.0,243.1" fill="#a4a4aa"/>
<polygon points="1214.4,235.8 1215.5,236.0 1215.8,243.8 1214.7,243.5" fill="#a4a4aa"/>
<line x1="1216.0" y1="183.8" x2="1218.6" y2="249.2" stroke="#7a3a1e" stroke-width="0.8"/>
<polygon points="1217.6,183.9 1222.7,184.4 1223.5,208.7 1218.5,207.9" fill="#2e2e30"/>
<polygon points="1218.9,192.5 1220.0,192.6 1220.4,203.4 1219.3,203.3" fill="#a4a4aa"/>
<polygon points="1220.7,192.7 1221.8,192.8 1222.2,203.7 1221.1,203.5" fill="#a4a4aa"/>
<polygon points="1218.6,211.2 1223.7,212.0 1224.3,228.6 1219.2,227.6" fill="#2e2e30"/>
<polygon points="1219.8,217.1 1220.9,217.3 1221.2,224.8 1220.1,224.5" fill="#a4a4aa"/>
<polygon points="1221.6,217.5 1222.8,217.7 1223.0,225.1 1221.9,224.9" fill="#a4a4aa"/>
<polygon points="1219.4,230.9 1224.4,232.0 1225.0,249.7 1220.0,248.3" fill="#2e2e30"/>
<polygon points="1220.6,237.2 1221.7,237.5 1222.0,245.4 1220.9,245.1" fill="#a4a4aa"/>
<polygon points="1222.3,237.6 1223.5,237.9 1223.8,245.9 1222.6,245.6" fill="#a4a4aa"/>
<line x1="1224.3" y1="184.5" x2="1226.6" y2="251.4" stroke="#7a3a1e" stroke-width="0.8"/>
<polygon points="1225.8,184.7 1231.2,185.2 1232.0,210.0 1226.7,209.2" fill="#2e2e30"/>
<polygon points="1227.2,193.4 1228.4,193.6 1228.7,204.6 1227.6,204.5" fill="#a4a4aa"/>
<polygon points="1229.1,193.7 1230.3,193.8 1230.7,204.9 1229.4,204.7" fill="#a4a4aa"/>
<polygon points="1226.8,212.6 1232.1,213.4 1232.7,230.4 1227.4,229.3" fill="#2e2e30"/>
<polygon points="1228.1,218.6 1229.2,218.8 1229.5,226.4 1228.3,226.2" fill="#a4a4aa"/>
<polygon points="1229.9,219.0 1231.1,219.2 1231.4,226.8 1230.2,226.5" fill="#a4a4aa"/>
<polygon points="1227.5,232.6 1232.8,233.8 1233.4,251.8 1228.2,250.5" fill="#2e2e30"/>
<polygon points="1228.8,239.1 1229.9,239.4 1230.2,247.5 1229.1,247.2" fill="#a4a4aa"/>
<polygon points="1230.6,239.6 1231.8,239.9 1232.1,248.0 1230.9,247.7" fill="#a4a4aa"/>
<line x1="1232.8" y1="185.4" x2="1235.1" y2="253.6" stroke="#7a3a1e" stroke-width="0.8"/>
<polygon points="1234.5,185.5 1240.0,186.1 1240.8,211.4 1235.3,210.5" fill="#2e2e30"/>
<polygon points="1235.9,194.5 1237.1,194.6 1237.4,205.9 1236.2,205.7" fill="#a4a4aa"/>
<polygon points="1237.8,194.7 1239.1,194.8 1239.4,206.2 1238.2,206.0" fill="#a4a4aa"/>
<polygon points="1235.4,214.0 1240.9,214.9 1241.5,232.2 1236.0,231.1" fill="#2e2e30"/>
<polygon points="1236.7,220.2 1237.9,220.4 1238.1,228.1 1236.9,227.9" fill="#a4a4aa"/>
<polygon points="1238.6,220.5 1239.9,220.8 1240.1,228.5 1238.9,228.3" fill="#a4a4aa"/>
<polygon points="1236.1,234.5 1241.6,235.7 1242.1,254.1 1236.7,252.7" fill="#2e2e30"/>
<polygon points="1237.4,241.1 1238.6,241.4 1238.8,249.7 1237.6,249.4" fill="#a4a4aa"/>
<polygon points="1239.3,241.6 1240.5,241.9 1240.8,250.2 1239.5,249.8" fill="#a4a4aa"/>
<line x1="1241.8" y1="186.2" x2="1243.9" y2="255.9" stroke="#7a3a1e" stroke-width="0.8"/>
<polygon points="1243.5,186.4 1249.3,187.0 1250.0,212.9 1244.3,212.0" fill="#2e2e30"/>
<polygon points="1244.9,195.5 1246.2,195.7 1246.5,207.2 1245.3,207.1" fill="#a4a4aa"/>
<polygon points="1246.9,195.8 1248.3,195.9 1248.6,207.5 1247.3,207.3" fill="#a4a4aa"/>
<polygon points="1244.4,215.5 1250.1,216.4 1250.6,234.2 1244.9,233.0" fill="#2e2e30"/>
<polygon points="1245.7,221.8 1247.0,222.1 1247.2,230.0 1245.9,229.7" fill="#a4a4aa"/>
<polygon points="1247.7,222.2 1249.0,222.4 1249.2,230.4 1247.9,230.1" fill="#a4a4aa"/>
<polygon points="1245.0,236.4 1250.7,237.7 1251.2,256.5 1245.5,255.0" fill="#2e2e30"/>
<polygon points="1246.3,243.2 1247.6,243.5 1247.8,251.9 1246.6,251.6" fill="#a4a4aa"/>
<polygon points="1248.3,243.7 1249.6,244.0 1249.9,252.5 1248.6,252.1" fill="#a4a4aa"/>
<line x1="1251.1" y1="187.1" x2="1253.1" y2="258.4" stroke="#7a3a1e" stroke-width="0.8"/>
<polygon points="1253.0,187.3 1259.0,187.9 1259.7,214.4 1253.6,213.5" fill="#2e2e30"/>
<polygon points="1254.4,196.6 1255.7,196.8 1256.0,208.6 1254.7,208.4" fill="#a4a4aa"/>
<polygon points="1256.5,196.9 1257.9,197.1 1258.2,208.9 1256.8,208.7" fill="#a4a4aa"/>
<polygon points="1253.7,217.0 1259.8,218.1 1260.2,236.2 1254.2,234.9" fill="#2e2e30"/>
<polygon points="1255.1,223.5 1256.4,223.8 1256.6,231.9 1255.3,231.6" fill="#a4a4aa"/>
<polygon points="1257.2,223.9 1258.6,224.2 1258.8,232.3 1257.4,232.0" fill="#a4a4aa"/>
<polygon points="1254.3,238.5 1260.3,239.8 1260.8,259.0 1254.8,257.5" fill="#2e2e30"/>
<polygon points="1255.7,245.4 1257.0,245.7 1257.2,254.3 1255.9,254.0" fill="#a4a4aa"/>
<polygon points="1257.8,245.9 1259.1,246.2 1259.4,254.9 1258.0,254.5" fill="#a4a4aa"/>
<line x1="1260.9" y1="188.1" x2="1262.7" y2="260.9" stroke="#7a3a1e" stroke-width="0.8"/>
<polygon points="1262.8,188.3 1269.2,188.9 1269.8,216.0 1263.5,215.0" fill="#2e2e30"/>
<polygon points="1264.3,197.8 1265.7,198.0 1266.0,210.1 1264.6,209.9" fill="#a4a4aa"/>
<polygon points="1266.5,198.1 1268.0,198.3 1268.3,210.4 1266.8,210.2" fill="#a4a4aa"/>
<polygon points="1263.6,218.7 1269.9,219.7 1270.3,238.3 1264.0,236.9" fill="#2e2e30"/>
<polygon points="1264.9,225.3 1266.3,225.6 1266.5,233.8 1265.1,233.6" fill="#a4a4aa"/>
<polygon points="1267.1,225.7 1268.6,226.0 1268.8,234.3 1267.3,234.0" fill="#a4a4aa"/>
<polygon points="1264.1,240.6 1270.3,241.9 1270.8,261.6 1264.5,260.0" fill="#2e2e30"/>
<polygon points="1265.5,247.7 1266.8,248.0 1267.0,256.8 1265.7,256.5" fill="#a4a4aa"/>
<polygon points="1267.6,248.2 1269.1,248.5 1269.3,257.4 1267.8,257.0" fill="#a4a4aa"/>
<line x1="1271.2" y1="189.1" x2="1272.7" y2="263.6" stroke="#7a3a1e" stroke-width="0.8"/>
<polygon points="1273.2,189.3 1279.9,189.9 1280.4,217.7 1273.8,216.6" fill="#2e2e30"/>
<polygon points="1274.7,199.0 1276.2,199.2 1276.4,211.6 1275.0,211.4" fill="#a4a4aa"/>
<polygon points="1277.0,199.3 1278.6,199.5 1278.8,211.9 1277.3,211.7" fill="#a4a4aa"/>
<polygon points="1273.8,220.4 1280.5,221.5 1280.8,240.5 1274.2,239.1" fill="#2e2e30"/>
<polygon points="1275.3,227.2 1276.7,227.5 1276.9,235.9 1275.4,235.6" fill="#a4a4aa"/>
<polygon points="1277.6,227.6 1279.1,227.9 1279.3,236.4 1277.7,236.1" fill="#a4a4aa"/>
<polygon points="1274.3,242.8 1280.9,244.2 1281.2,264.4 1274.7,262.7" fill="#2e2e30"/>
<polygon points="1275.7,250.1 1277.2,250.4 1277.3,259.4 1275.9,259.0" fill="#a4a4aa"/>
<polygon points="1278.0,250.6 1279.5,251.0 1279.7,260.0 1278.2,259.6" fill="#a4a4aa"/>
<line x1="1282.0" y1="190.1" x2="1283.3" y2="266.4" stroke="#7a3a1e" stroke-width="0.8"/>
<polygon points="1284.1,190.3 1291.1,191.0 1291.5,219.4 1284.5,218.3" fill="#2e2e30"/>
<polygon points="1285.6,200.3 1287.2,200.5 1287.4,213.2 1285.8,213.0" fill="#a4a4aa"/>
<polygon points="1288.1,200.6 1289.7,200.8 1289.9,213.6 1288.3,213.3" fill="#a4a4aa"/>
<polygon points="1284.6,222.2 1291.6,223.4 1291.8,242.8 1284.9,241.3" fill="#2e2e30"/>
<polygon points="1286.1,229.2 1287.6,229.4 1287.7,238.1 1286.2,237.8" fill="#a4a4aa"/>
<polygon points="1288.5,229.6 1290.1,229.9 1290.2,238.6 1288.6,238.3" fill="#a4a4aa"/>
<polygon points="1285.0,245.1 1291.9,246.6 1292.2,267.3 1285.3,265.5" fill="#2e2e30"/>
<polygon points="1286.5,252.6 1288.0,252.9 1288.1,262.1 1286.6,261.8" fill="#a4a4aa"/>
<polygon points="1288.9,253.1 1290.5,253.5 1290.6,262.8 1289.0,262.4" fill="#a4a4aa"/>
<line x1="1293.3" y1="191.2" x2="1294.3" y2="269.3" stroke="#7a3a1e" stroke-width="0.8"/>
<polygon points="1295.5,191.4 1302.9,192.1 1303.2,221.3 1295.9,220.1" fill="#2e2e30"/>
<polygon points="1297.1,201.7 1298.7,201.9 1298.9,214.9 1297.3,214.6" fill="#a4a4aa"/>
<polygon points="1299.7,202.0 1301.4,202.2 1301.5,215.3 1299.8,215.0" fill="#a4a4aa"/>
<polygon points="1295.9,224.1 1303.2,225.3 1303.4,245.2 1296.2,243.7" fill="#2e2e30"/>
<polygon points="1297.5,231.2 1299.1,231.5 1299.2,240.4 1297.6,240.1" fill="#a4a4aa"/>
<polygon points="1300.0,231.7 1301.7,232.0 1301.8,240.9 1300.1,240.6" fill="#a4a4aa"/>
<polygon points="1296.2,247.6 1303.5,249.1 1303.7,270.3 1296.5,268.4" fill="#2e2e30"/>
<polygon points="1297.8,255.2 1299.3,255.6 1299.4,265.0 1297.9,264.6" fill="#a4a4aa"/>
<polygon points="1300.3,255.8 1301.9,256.2 1302.1,265.7 1300.4,265.2" fill="#a4a4aa"/>
<line x1="1305.2" y1="192.3" x2="1306.0" y2="272.4" stroke="#7a3a1e" stroke-width="0.8"/>
<polygon points="1307.5,192.6 1322.5,194.0 1322.6,224.4 1307.8,222.0" fill="#2e2e30"/>
<polygon points="1310.5,203.3 1313.8,203.7 1313.9,217.1 1310.6,216.6" fill="#a4a4aa"/>
<polygon points="1315.7,203.9 1319.2,204.3 1319.2,217.8 1315.8,217.3" fill="#a4a4aa"/>
<polygon points="1307.8,226.1 1322.6,228.5 1322.7,249.2 1308.0,246.1" fill="#2e2e30"/>
<polygon points="1310.8,233.6 1314.0,234.2 1314.0,243.4 1310.8,242.7" fill="#a4a4aa"/>
<polygon points="1315.9,234.6 1319.3,235.2 1319.4,244.4 1316.0,243.7" fill="#a4a4aa"/>
<polygon points="1308.0,250.1 1322.7,253.3 1322.8,275.3 1308.2,271.5" fill="#2e2e30"/>
<polygon points="1311.0,258.3 1314.2,259.0 1314.2,268.7 1311.0,267.9" fill="#a4a4aa"/>
<polygon points="1316.1,259.5 1319.5,260.3 1319.5,270.1 1316.1,269.2" fill="#a4a4aa"/>
<line x1="1325.0" y1="194.2" x2="1325.3" y2="277.5" stroke="#7a3a1e" stroke-width="0.8"/>
<polygon points="1320.2,193.8 1328.4,194.6 1328.5,225.3 1320.3,224.0" fill="#2e2e30"/>
<polygon points="1321.9,204.6 1323.6,204.8 1323.7,218.5 1321.9,218.2" fill="#a4a4aa"/>
<polygon points="1324.7,204.9 1326.6,205.2 1326.6,218.9 1324.7,218.6" fill="#a4a4aa"/>
<polygon points="1320.4,228.1 1328.5,229.5 1328.5,250.4 1320.5,248.7" fill="#2e2e30"/>
<polygon points="1322.0,235.7 1323.8,236.0 1323.8,245.3 1322.0,245.0" fill="#a4a4aa"/>
<polygon points="1324.8,236.2 1326.7,236.5 1326.7,245.9 1324.8,245.5" fill="#a4a4aa"/>
<polygon points="1320.5,252.8 1328.5,254.6 1328.6,276.8 1320.6,274.7" fill="#2e2e30"/>
<polygon points="1322.1,260.9 1323.9,261.3 1323.9,271.2 1322.1,270.7" fill="#a4a4aa"/>
<polygon points="1324.9,261.5 1326.7,262.0 1326.8,271.9 1324.9,271.5" fill="#a4a4aa"/>
<line x1="1331.0" y1="194.8" x2="1331.1" y2="279.1" stroke="#7a3a1e" stroke-width="0.8"/>
<polygon points="1333.5,195.1 1342.2,195.9 1342.1,227.4 1333.6,226.1" fill="#2e2e30"/>
<polygon points="1335.3,206.2 1337.1,206.4 1337.1,220.5 1335.3,220.2" fill="#a4a4aa"/>
<polygon points="1338.3,206.5 1340.3,206.8 1340.2,220.9 1338.2,220.6" fill="#a4a4aa"/>
<polygon points="1333.6,230.4 1342.1,231.8 1342.1,253.3 1333.6,251.5" fill="#2e2e30"/>
<polygon points="1335.3,238.1 1337.1,238.4 1337.1,248.0 1335.3,247.6" fill="#a4a4aa"/>
<polygon points="1338.2,238.6 1340.2,239.0 1340.2,248.6 1338.2,248.2" fill="#a4a4aa"/>
<polygon points="1333.6,255.7 1342.1,257.5 1342.0,280.3 1333.6,278.1" fill="#2e2e30"/>
<polygon points="1335.3,264.0 1337.1,264.4 1337.1,274.5 1335.3,274.1" fill="#a4a4aa"/>
<polygon points="1338.2,264.6 1340.2,265.1 1340.1,275.3 1338.2,274.8" fill="#a4a4aa"/>
<line x1="1344.9" y1="196.1" x2="1344.6" y2="282.7" stroke="#7a3a1e" stroke-width="0.8"/>
<polygon points="1347.7,196.4 1356.8,197.3 1356.6,229.7 1347.5,228.3" fill="#2e2e30"/>
<polygon points="1349.4,207.9 1351.4,208.1 1351.3,222.5 1349.3,222.2" fill="#a4a4aa"/>
<polygon points="1352.6,208.2 1354.7,208.5 1354.6,223.0 1352.5,222.7" fill="#a4a4aa"/>
<polygon points="1347.5,232.7 1356.6,234.2 1356.4,256.2 1347.4,254.4" fill="#2e2e30"/>
<polygon points="1349.3,240.6 1351.2,241.0 1351.2,250.8 1349.2,250.4" fill="#a4a4aa"/>
<polygon points="1352.4,241.2 1354.5,241.6 1354.4,251.5 1352.3,251.0" fill="#a4a4aa"/>
<polygon points="1347.4,258.7 1356.4,260.6 1356.2,284.0 1347.3,281.7" fill="#2e2e30"/>
<polygon points="1349.1,267.2 1351.1,267.6 1351.0,278.1 1349.1,277.6" fill="#a4a4aa"/>
<polygon points="1352.3,267.9 1354.3,268.4 1354.3,278.9 1352.2,278.4" fill="#a4a4aa"/>
<line x1="1359.7" y1="197.6" x2="1359.0" y2="286.5" stroke="#7a3a1e" stroke-width="0.8"/>
<polygon points="1362.6,197.8 1372.3,198.8 1371.9,232.1 1362.3,230.6" fill="#2e2e30"/>
<polygon points="1364.4,209.6 1366.5,209.9 1366.3,224.7 1364.2,224.4" fill="#a4a4aa"/>
<polygon points="1367.8,210.0 1370.0,210.3 1369.8,225.2 1367.6,224.9" fill="#a4a4aa"/>
<polygon points="1362.3,235.1 1371.8,236.7 1371.6,259.4 1362.1,257.4" fill="#2e2e30"/>
<polygon points="1364.1,243.3 1366.2,243.7 1366.0,253.8 1364.0,253.4" fill="#a4a4aa"/>
<polygon points="1367.4,243.9 1369.6,244.3 1369.5,254.5 1367.3,254.0" fill="#a4a4aa"/>
<polygon points="1362.0,261.9 1371.5,263.9 1371.2,288.0 1361.8,285.5" fill="#2e2e30"/>
<polygon points="1363.8,270.6 1365.9,271.1 1365.8,281.8 1363.7,281.3" fill="#a4a4aa"/>
<polygon points="1367.1,271.4 1369.3,271.9 1369.2,282.7 1367.0,282.1" fill="#a4a4aa"/>
<line x1="1375.3" y1="199.1" x2="1374.1" y2="290.5" stroke="#7a3a1e" stroke-width="0.8"/>
<line x1="1178.2" y1="204.5" x2="1384.4" y2="238.8" stroke="#262626" stroke-width="1.5"/>
<line x1="1178.2" y1="203.0" x2="1384.4" y2="236.5" stroke="#e6e6e6" stroke-width="2.6"/>
<line x1="1179.1" y1="222.1" x2="1383.9" y2="266.6" stroke="#262626" stroke-width="1.5"/>
<line x1="1179.1" y1="220.7" x2="1384.0" y2="264.3" stroke="#e6e6e6" stroke-width="2.6"/>
<polygon points="1385.0,200.0 1412.0,197.0 1412.0,278.4 1383.5,293.0" fill="#ec865a" stroke="#3c2014" stroke-width="0.8"/>
<polygon points="1325.0,162.0 1412.0,165.0 1412.0,197.0 1385.0,200.0 1325.0,194.5" fill="#ec865a" stroke="#3c2014" stroke-width="0.8"/>
<line x1="1325" y1="172" x2="1412" y2="175" stroke="#3c2014" stroke-width="0.7"/>
<polygon points="1333.0,183.0 1340.0,183.0 1340.0,191.0 1333.0,191.0" fill="#9a8a80"/>
<polygon points="1412.0,165.0 1505.0,158.8 1505.0,178.0 1512.0,177.3 1509.5,228.7 1412.0,278.4" fill="#ec865a" stroke="#3c2014" stroke-width="0.8"/>
<polygon points="1415.6,175.3 1421.2,174.7 1421.4,195.6 1415.7,196.7" fill="#2e2e30"/>
<polygon points="1424.0,174.4 1429.2,173.8 1429.4,194.1 1424.1,195.1" fill="#2e2e30"/>
<polygon points="1431.7,173.5 1436.6,173.0 1436.9,192.6 1432.0,193.6" fill="#2e2e30"/>
<polygon points="1415.7,203.3 1420.3,202.3 1420.6,264.7 1415.8,266.9" fill="#3a3c44"/>
<polygon points="1424.1,201.4 1428.4,200.5 1429.0,260.7 1424.6,262.8" fill="#3a3c44"/>
<polygon points="1432.0,199.7 1436.1,198.8 1436.9,256.9 1432.8,258.9" fill="#3a3c44"/>
<polygon points="1440.6,163.1 1492.3,159.6 1495.5,225.9 1442.2,250.2" fill="#464a54"/>
<polygon points="1441.3,201.6 1493.7,189.1 1495.5,225.9 1442.2,250.2" fill="#2c2c30"/>
<polygon points="1440.6,163.1 1443.6,162.9 1445.2,248.8 1442.2,250.2" fill="#8a4424"/>
<polygon points="1441.4,163.0 1442.5,163.0 1444.1,249.3 1442.9,249.9" fill="#c86e42"/>
<polygon points="1447.8,162.6 1450.6,162.4 1452.5,245.5 1449.7,246.8" fill="#8a4424"/>
<polygon points="1448.5,162.6 1449.6,162.5 1451.5,246.0 1450.4,246.5" fill="#c86e42"/>
<polygon points="1454.6,162.2 1457.2,162.0 1459.4,242.4 1456.7,243.6" fill="#8a4424"/>
<polygon points="1455.2,162.1 1456.2,162.1 1458.4,242.8 1457.4,243.3" fill="#c86e42"/>
<polygon points="1460.9,161.7 1463.4,161.6 1465.8,239.4 1463.3,240.6" fill="#8a4424"/>
<polygon points="1461.5,161.7 1462.5,161.6 1464.9,239.9 1463.9,240.3" fill="#c86e42"/>
<polygon points="1466.9,161.3 1469.2,161.2 1471.9,236.7 1469.5,237.8" fill="#8a4424"/>
<polygon points="1467.5,161.3 1468.4,161.2 1471.0,237.1 1470.1,237.5" fill="#c86e42"/>
<polygon points="1472.6,161.0 1474.7,160.8 1477.6,234.1 1475.3,235.1" fill="#8a4424"/>
<polygon points="1473.1,160.9 1473.9,160.9 1476.7,234.5 1475.9,234.9" fill="#c86e42"/>
<polygon points="1477.9,160.6 1479.9,160.5 1482.9,231.7 1480.8,232.6" fill="#8a4424"/>
<polygon points="1478.4,160.6 1479.2,160.5 1482.1,232.0 1481.3,232.4" fill="#c86e42"/>
<polygon points="1482.9,160.3 1484.9,160.1 1488.0,229.3 1486.0,230.3" fill="#8a4424"/>
<polygon points="1483.4,160.2 1484.2,160.2 1487.2,229.7 1486.5,230.0" fill="#c86e42"/>
<polygon points="1487.7,160.0 1489.6,159.8 1492.8,227.2 1490.9,228.0" fill="#8a4424"/>
<polygon points="1488.2,159.9 1488.9,159.9 1492.1,227.5 1491.4,227.8" fill="#c86e42"/>
<polygon points="1495.0,173.9 1496.4,173.7 1498.5,214.4 1497.1,215.0" fill="#34363c"/>
<polygon points="1497.7,173.5 1499.0,173.3 1501.1,213.4 1499.8,213.9" fill="#34363c"/>
<polygon points="1500.3,173.1 1501.5,173.0 1503.7,212.4 1502.4,212.9" fill="#34363c"/>
<polygon points="1502.8,172.8 1504.0,172.6 1506.2,211.4 1504.9,211.9" fill="#34363c"/>
<polygon points="1452.2,231.7 1479.8,220.9 1480.7,243.2 1452.8,257.5" fill="#2e2c2c"/>
<polygon points="1461.5,224.3 1468.2,221.8 1469.1,249.1 1462.3,252.6" fill="#5a5a5a"/>
<polygon points="1462.8,235.1 1467.6,233.0 1468.0,245.0 1463.2,247.4" fill="#e8e8e0"/>
<line x1="1385.5" y1="237.2" x2="1512.0" y2="199.6" stroke="#262626" stroke-width="1.5"/>
<line x1="1385.5" y1="235.0" x2="1512.0" y2="197.4" stroke="#e6e6e6" stroke-width="2.6"/>
<line x1="1385.5" y1="266.9" x2="1512.0" y2="215.6" stroke="#262626" stroke-width="1.5"/>
<line x1="1385.5" y1="264.7" x2="1512.0" y2="213.4" stroke="#e6e6e6" stroke-width="2.6"/>
<polygon points="1400.0,258.0 1425.0,250.0 1426.0,254.0 1401.0,262.0" fill="#2a2a2a"/>
<polygon points="1482.0,224.0 1495.0,220.0 1496.0,223.0 1483.0,227.0" fill="#2a2a2a"/>
  </svg>
</div>
<!-- COLLISIONS PANEL -->
<div class="a" style="left:942px;top:420px;width:846px;height:387px;background:#535353;border-radius:4px 4px 3px 3px;overflow:hidden">
  <div class="a" style="left:423px;top:6px;width:42px;height:3px;background:#3b98b8"></div>
  <svg class="a" style="left:13px;top:13px" width="18" height="16" viewBox="0 0 18 16">
    <rect x="1" y="1" width="13" height="2" fill="#e8e8e8"/>
    <rect x="1" y="5" width="13" height="2" fill="#e8e8e8"/>
    <rect x="1" y="9" width="9" height="2" fill="#e8e8e8"/>
    <path d="M12 9 L17 12 L12 15 Z" fill="#e8e8e8"/>
  </svg>
  <div class="a" style="left:44.4px;top:12.7px;font-size:14.3px;line-height:16px;color:#e4e4e4;white-space:nowrap">Коллизии (количество: 0)</div>
  <!-- header icons -->
  <svg class="a" style="left:674px;top:10px" width="22" height="22" viewBox="0 0 22 22" fill="none" stroke="#e4e4e4" stroke-width="1.7">
    <path d="M14.7 4.8 V2.8 Q14.7 1.2 13.1 1.2 H3.9 Q2.3 1.2 2.3 2.8 V11 Q2.3 12.6 3.9 12.6 H11.2"/>
    <path d="M7.1 9.2 V16.8 Q7.1 18.4 8.7 18.4 H17.9 Q19.5 18.4 19.5 16.8 V8 Q19.5 6.4 17.9 6.4 H10.3"/>
  </svg>
  <svg class="a" style="left:711px;top:11px" width="18" height="20" viewBox="0 0 18 20" fill="#e4e4e4">
    <rect x="1.5" y="1" width="15" height="2"/><rect x="1.5" y="17" width="15" height="2"/>
    <path d="M9 4 L12.5 7.5 H10 V12.5 H12.5 L9 16 L5.5 12.5 H8 V7.5 H5.5 Z"/>
  </svg>
  <svg class="a" style="left:745px;top:10px" width="18" height="21" viewBox="0 0 18 21" fill="#e4e4e4">
    <rect x="1.5" y="9" width="15" height="1.8"/><rect x="1.5" y="11.8" width="15" height="1.8"/>
    <path d="M8 1 H10 V4.5 H12.5 L9 8 L5.5 4.5 H8 Z"/>
    <path d="M9 14.5 L12.5 18 H10 V21 H8 V18 H5.5 Z"/>
  </svg>
  <svg class="a" style="left:778px;top:11px" width="20" height="20" viewBox="0 0 24 24"><path fill="#e4e4e4" d="M19.14 12.94c.04-.3.06-.61.06-.94 0-.32-.02-.64-.07-.94l2.03-1.58a.49.49 0 0 0 .12-.61l-1.92-3.32a.488.488 0 0 0-.59-.22l-2.39.96c-.5-.38-1.03-.7-1.62-.94l-.36-2.54a.484.484 0 0 0-.48-.41h-3.84c-.24 0-.43.17-.47.41l-.36 2.54c-.59.24-1.13.57-1.62.94l-2.39-.96c-.22-.08-.47 0-.59.22L2.74 8.87c-.12.21-.08.47.12.61l2.03 1.58c-.05.3-.09.63-.09.94s.02.64.07.94l-2.03 1.58a.49.49 0 0 0-.12.61l1.92 3.32c.12.22.37.29.59.22l2.39-.96c.5.38 1.03.7 1.62.94l.36 2.54c.05.24.24.41.48.41h3.84c.24 0 .44-.17.47-.41l.36-2.54c.59-.24 1.13-.56 1.62-.94l2.39.96c.22.08.47 0 .59-.22l1.92-3.32c.12-.22.07-.47-.12-.61l-2.01-1.58zM12 15.6c-1.98 0-3.6-1.62-3.6-3.6s1.62-3.6 3.6-3.6 3.6 1.62 3.6 3.6-1.62 3.6-3.6 3.6z"/></svg>
  <svg class="a" style="left:815.5px;top:17px" width="13" height="9" viewBox="0 0 13 9"><path d="M1.5 1.5 L6.5 6.5 L11.5 1.5" fill="none" stroke="#e4e4e4" stroke-width="1.8"/></svg>
  <!-- table header -->
  <div class="a" style="left:0;top:37px;width:60px;height:31px;background:#fff;border-bottom:1px solid #dcdcdc"></div>
  <div class="a" style="left:19px;top:45.5px;width:15px;height:15px;border:2px solid #3a8db0;border-radius:2px"></div>
  <div class="a" style="left:60px;top:37px;width:786px;height:31px;background:#676767;border-radius:0 0 0 2px"></div>
  <div class="a" style="left:150px;top:37px;width:1px;height:31px;background:#575757"></div>
  <div class="a" style="left:436px;top:37px;width:1px;height:31px;background:#575757"></div>
  <div class="a" style="left:628px;top:37px;width:1px;height:31px;background:#575757"></div>
  <div class="th" style="left:77px">Статус</div>
  <div class="th" style="left:166.5px">Элемент (Модель А)</div>
  <div class="th" style="left:452.8px">Элемент (Модель B)</div>
  <div class="th" style="left:644.6px">GUID элемента (Модель А)</div>
  <div class="a" style="left:0;top:68px;width:846px;height:311px;background:#fff"></div>
  <div class="a" style="left:669.3px;top:77.4px;font-size:14px;line-height:16px;color:#9a9a9a">Отсутствуют данные</div>
  <div class="a" style="left:0;top:379px;width:846px;height:8px;background:#676767"></div>
  <div class="a" style="left:0;top:379px;width:438px;height:8px;background:#3a93b3;border-radius:0 0 0 3px"></div>
</div>

<!-- RIGHT TOOLBAR -->
<div class="a" style="left:1796px;top:34px;width:36px;height:773px;background:#545454">
<svg class="a" style="left:0;top:0" width="36" height="773" viewBox="0 0 36 773">
  <rect x="2" y="600" width="32" height="32" fill="#888"/>
  <rect x="2" y="644" width="32" height="32" fill="#888"/>
 <g fill="none" stroke="#e4e4e4" stroke-width="1.4">
  <!-- cloud tree -->
  <path d="M14 29.5 H10.8 A4.6 4.6 0 0 1 10.2 20.4 A7.3 7.3 0 0 1 25.4 20.2 A4.7 4.7 0 0 1 25.2 29.5 H22"/>
  <path d="M18 19.5 V35 M18 26.5 L13.5 23 M18 28.5 L22.5 25 M18 23.5 L20.5 21" stroke-width="1.3"/>
  <!-- screen + hex -->
  <path d="M13.5 72.5 H5.5 V55.8 H28.5 V63.5"/>
  <path d="M13.5 72.5 V75.5 H10"/>
  <path d="M15.5 69.5 V64.5 H20.5 M25 64.5 H30.5 V69.5 M30.5 75.5 V80.7 H25 M20.5 80.7 H15.5 V75.5" stroke-width="1.3"/>
  <!-- ruler -->
  <rect x="5.2" y="112.7" width="25.6" height="8" stroke-width="1.4"/>
  <path d="M8.5 120 V117.5 M11.5 120 V116 M14.5 120 V117.5 M17.5 120 V115.5 M20.5 120 V117.5 M23.5 120 V116 M26.5 120 V117.5" stroke-width="1.2"/>
  <!-- planes -->
  <path d="M5 163 L12.8 156.8 H31.2 L23.4 163 Z" stroke-width="1.3"/>
  <!-- box section -->
  <path d="M6.2 200 H22 V215.5 H6.2 Z M6.2 200 L13.5 194.5 H29.5 V210 L22 215.5 M22 200 L29.5 194.5" stroke-width="1.2"/>
  <path d="M13.5 194.5 V210 H29.5 M6.2 215.5 L13.5 210" stroke-width="0.9"/>
  <!-- plan -->
  <path d="M8 238.8 H30 V258.5 H4.5 V242.3 Z" stroke-width="1.3"/>
  <path d="M4.5 248.5 H30 M15.5 238.8 V258.5" stroke-width="1.2" stroke-dasharray="2 1.5"/>
  <path d="M22 258.5 V254.5 H30" stroke-width="1.2"/>
  <path d="M6 260.5 H32 V241" stroke-width="1.6" stroke="#dcdcdc"/>
  <!-- target -->
  <circle cx="18" cy="292.7" r="7.3" stroke-width="1.8"/>
  <path d="M18 281.5 V285 M18 300.5 V304 M6.8 292.7 H10.3 M25.7 292.7 H29.2" stroke-width="1.8"/>
  <!-- flag -->
  <circle cx="18" cy="336.5" r="12.8" stroke-width="1.2"/>
  <path d="M12.8 344.5 V330 C15 328.5 17 328.5 19 330 C21 331.5 23 331.5 25 330.5 V337.2 C23 338.2 21 338.2 19 336.7 C17 335.2 15 335.2 12.8 336.7" stroke-width="1.2"/>
  <!-- grid -->
  <path d="M3.3 390 L33 373 M3.3 400 L33 383 M4 384 L22.5 395 M12.6 378 L31.7 389" stroke-width="1.2"/>
  <!-- dashed boxes -->
  <rect x="6.3" y="423.3" width="23.4" height="23.4" stroke-width="1.4" stroke-dasharray="2.2 2"/>
  <rect x="6.3" y="467.3" width="23.4" height="23.4" stroke-width="1.4" stroke-dasharray="2.2 2"/>
  <rect x="6.3" y="511.3" width="23.4" height="23.4" stroke-width="1.4" stroke-dasharray="2.2 2"/>
  <rect x="6.3" y="555.3" width="23.4" height="23.4" stroke-width="1.4" stroke-dasharray="2.2 2"/>
  <!-- small cube -->
  <path d="M18 428 L23.8 431.4 V438.6 L18 442 L12.2 438.6 V431.4 Z M12.2 431.4 L18 434.8 L23.8 431.4 M18 434.8 V442" stroke-width="1.1"/>
  <!-- orbit -->
  <ellipse cx="18" cy="660.3" rx="11.5" ry="5.3" stroke-width="2"/>
  <ellipse cx="18" cy="660.3" rx="5.3" ry="11" stroke-width="2"/>
  <path d="M18 654.5 V658.5 L14.8 663 M18 658.5 L21.3 663" stroke-width="1"/>
 </g>
 <g fill="#e4e4e4">
  <rect x="5" y="122.3" width="26" height="2"/>
  <path d="M13.2 155.2 L22.7 147.2 V166.9 L13.2 175 Z"/>
  <path d="M12.5 201 L18 197 V214.5 L12.5 218 Z" fill="#dcdcdc"/>
  <circle cx="18" cy="292.7" r="3.8"/>
  <path d="M22.7 67.6 L27 70.1 V75.2 L22.7 77.7 L18.4 75.2 V70.1 Z"/>
  <text x="4" y="383" font-size="7" font-family="Liberation Sans" fill="#e4e4e4">1</text>
  <text x="14" y="377" font-size="7" font-family="Liberation Sans" fill="#e4e4e4">2</text>
  <!-- eye -->
  <path transform="translate(10.34 470.84) scale(0.68)" d="M12 4.5C7 4.5 2.73 7.61 1 12c1.73 4.39 6 7.5 11 7.5s9.27-3.11 11-7.5c-1.730-4.39-6-7.5-11-7.5zM12 17c-2.76 0-5-2.24-5-5s2.24-5 5-5 5 2.24 5 5-2.24 5-5 5zm0-8c-1.66 0-3 1.34-3 3s1.34 3 3 3 3-1.34 3-3-1.34-3-3-3z"/>
  <path transform="translate(9.64 514.74) scale(0.68)" d="M12 7c2.76 0 5 2.24 5 5 0 .65-.13 1.26-.36 1.830l2.92 2.92c1.51-1.26 2.7-2.89 3.43-4.75-1.73-4.39-6-7.5-11-7.5-1.4 0-2.74.25-3.98.7l2.16 2.16C10.74 7.13 11.35 7 12 7zM2 4.27l2.28 2.28.46.46C3.08 8.3 1.78 10.020 1 12c1.73 4.39 6 7.5 11 7.5 1.55 0 3.03-.3 4.38-.84l.42.42L19.73 22 21 20.73 3.27 3 2 4.27zM7.53 9.8l1.55 1.55c-.05.21-.08.43-.08.65 0 1.66 1.34 3 3 3 .22 0 .44-.03.65-.08l1.55 1.55c-.67.33-1.41.53-2.2.53-2.76 0-5-2.24-5-5 0-.79.2-1.53.53-2.2zm4.31-.78l3.15 3.15.02-.16c0-1.66-1.34-3-3-3l-.17.01z"/>
  <rect x="16" y="565" width="16" height="16" fill="#dedede"/>
  <path d="M6.7 606.9 L18.2 610.5 L17.6 627.6 L7.8 619.3 Z" fill="#e6e6e6"/>
  <path d="M18.2 610.5 L29 607.4 L28 619.9 L17.6 627.6 Z M6.7 606.9 L17.6 604.8 L29 607.4 L18.2 610.5 Z" fill="#8a8a8a" stroke="#e6e6e6" stroke-width="1.3" stroke-linejoin="round"/>
 </g>
 <path d="M19.5 567.5 L28.5 578.5 M28.5 567.5 L19.5 578.5" stroke="#333" stroke-width="1.3"/>
 <g fill="#3a3634">
  <rect x="0" y="92" width="36" height="1"/>
  <rect x="0" y="361" width="36" height="1"/>
  <rect x="0" y="410" width="36" height="1"/>
  <rect x="0" y="591" width="36" height="1"/>
  <rect x="0" y="684" width="36" height="1"/>
 </g>
 <path d="M3 764 V769 H8 Z" fill="#e4e4e4"/>
</svg>
</div>

<!-- ANNOTATIONS -->
<svg class="a" style="left:0;top:0;pointer-events:none" width="1835" height="810" viewBox="0 0 1835 810">
  <defs>
    <filter id="sh" x="-20%" y="-50%" width="140%" height="200%">
      <feGaussianBlur stdDeviation="2"/>
    </filter>
  </defs>
  <g opacity="0.45" filter="url(#sh)" fill="#000">
    <rect x="91" y="266" width="45.5" height="3.5"/>
    <rect x="93" y="509" width="59.3" height="3.5"/>
    <path d="M565.5 232.2 L496 252.5 L497 261 L482 257.5 L492.5 246.7 L493 248.5 L564 228.5 Z"/>
    <path d="M584 464.6 L498 491 L495 500 L480 497.7 L489.5 487 L491 489 L583 460.6 Z"/>
  </g>
  <g fill="#c00000">
    <rect x="87.2" y="261" width="45.4" height="3"/>
    <rect x="89.3" y="503.8" width="59.3" height="3"/>
    <path d="M562.2 227.7 L489.5 249.6 L493 254.3 L477 251 L488 240.7 L489 244.5 L561 224.7 Z"/>
    <path d="M580.6 460.2 L487.5 488.2 L491 494 L475.1 491.7 L485.5 481 L486.5 485.2 L579.6 457 Z"/>
  </g>
</svg>


</body></html>
